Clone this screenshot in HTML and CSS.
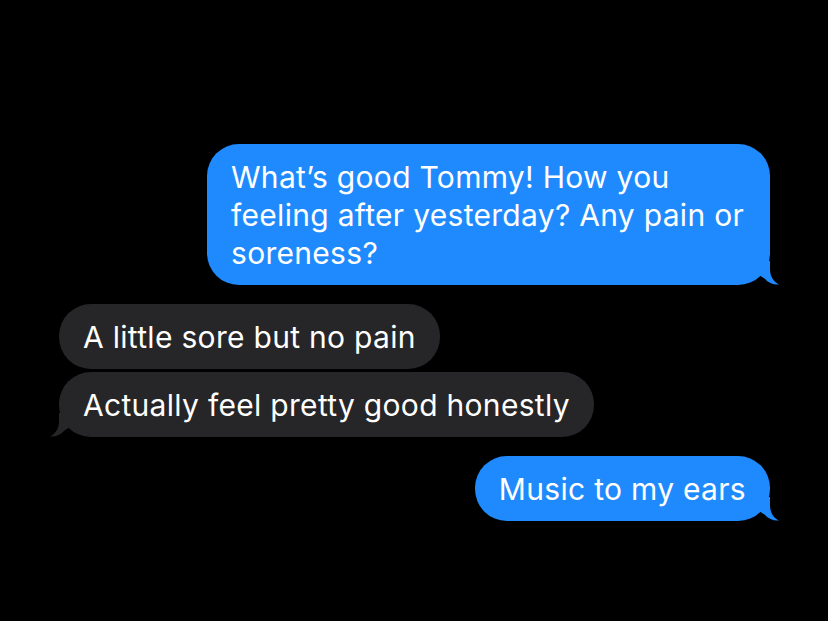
FILE: index.html
```html
<!DOCTYPE html>
<html lang="en">
<head>
<meta charset="utf-8">
<title>Messages</title>
<link rel="stylesheet" href="styles.css">
</head>
<body>
<main class="thread">
  <div class="msg sent gap-after">
    <div class="bubble blue wide">What’s good Tommy! How you feeling after yesterday? Any pain or soreness?<svg class="tail" viewBox="0 0 24 24" aria-hidden="true"><path d="M0 0 L14 0 L14 8 C14 15 17 20.5 23 23.5 C17.5 24 12.5 22 8.5 17.5 L0 12 Z"/></svg></div>
  </div>
  <div class="msg received">
    <div class="bubble grey">A little sore but no pain</div>
  </div>
  <div class="msg received gap-after">
    <div class="bubble grey">Actually feel pretty good honestly<svg class="tail left" viewBox="0 0 24 24" aria-hidden="true"><path d="M0 0 L14 0 L14 8 C14 15 17 20.5 23 23.5 C17.5 24 12.5 22 8.5 17.5 L0 12 Z"/></svg></div>
  </div>
  <div class="msg sent">
    <div class="bubble blue">Music to my ears<svg class="tail" viewBox="0 0 24 24" aria-hidden="true"><path d="M0 0 L14 0 L14 8 C14 15 17 20.5 23 23.5 C17.5 24 12.5 22 8.5 17.5 L0 12 Z"/></svg></div>
  </div>
</main>
</body>
</html>
```

FILE: styles.css
```css
html, body {
  margin: 0;
  padding: 0;
  background: #000;
  width: 828px;
  height: 621px;
  overflow: hidden;
}

.thread {
  display: flex;
  flex-direction: column;
  gap: 3px;
  padding: 144px 58px 0 59px;
  font-family: "Inter", "Liberation Sans", sans-serif;
  font-size: 30px;
  line-height: 38px;
  color: #fff;
  letter-spacing: 0.3px;
}

.msg {
  display: flex;
}

.msg.sent {
  justify-content: flex-end;
}

.msg.received {
  justify-content: flex-start;
}

.gap-after {
  margin-bottom: 16px;
}

.bubble {
  position: relative;
  padding: 13.5px 24px 13.5px 24px;
  border-radius: 32px;
  max-width: 563px;
  box-sizing: border-box;
}

.bubble.wide {
  width: 563px;
}

.blue {
  background: #1f8afe;
  fill: #1f8afe;
}

.grey {
  background: #262628;
  fill: #262628;
}

.tail {
  position: absolute;
  width: 24px;
  height: 24px;
  right: -10px;
  bottom: 0;
}

.tail.left {
  right: auto;
  left: -10px;
  transform: scaleX(-1);
}
```
